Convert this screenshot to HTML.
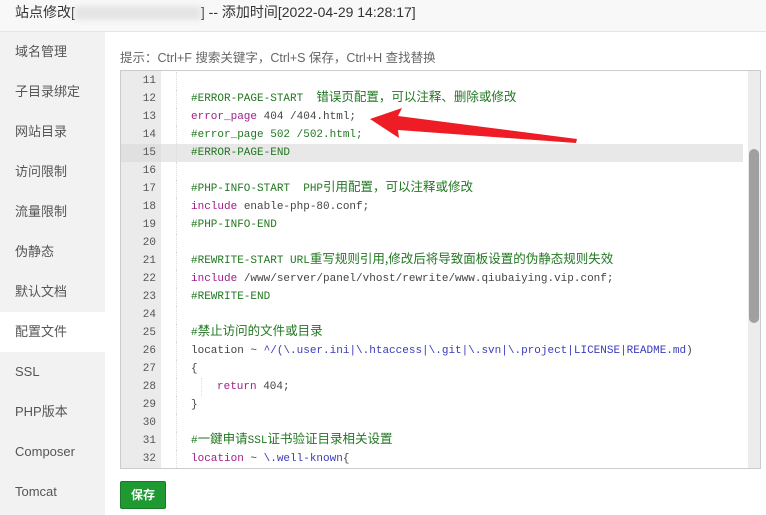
<!DOCTYPE html>
<html><head><meta charset="utf-8"><style>
*{margin:0;padding:0;box-sizing:border-box}
body{width:766px;height:515px;overflow:hidden;background:#fff;font-family:"Liberation Sans","Noto Sans CJK SC",sans-serif;position:relative}
.hd{position:absolute;left:0;top:0;width:766px;height:32px;background:#f8f8f8;border-bottom:1px solid #e5e5e5;font-size:14px;color:#333;padding-left:15px;line-height:24px}
.blur{display:inline-block;width:126px;height:14px;background:#e4e4e4;filter:blur(3px);vertical-align:middle}
.sb{position:absolute;left:0;top:32px;width:105px;height:483px;background:#f2f2f2}
.sb div{height:40px;line-height:40px;padding-left:15px;font-size:13px;color:#555}
.sb .on{background:#fff}
.tip{position:absolute;left:120px;top:47px;font-size:12.5px;color:#666}
.ed{position:absolute;left:120px;top:70px;width:641px;height:399px;border:1px solid #ccc;overflow:hidden;background:#fff}
.gut{position:absolute;left:0;top:0;width:40px;height:100%;background:#ebebeb}
.ln{position:absolute;left:0;width:100%;height:18px;font-family:"Liberation Mono","Noto Sans CJK SC",monospace;font-size:11px;line-height:18px;white-space:pre;color:#444}
.ln .n{position:absolute;left:0;width:35px;text-align:right;color:#555}
.ln .c{position:absolute;left:70px;top:0;height:18px}
.ln .g{position:absolute;left:55px;top:0;height:18px;border-left:1px dotted #ddd}
.z{display:inline-block;vertical-align:top;height:18px;line-height:18px;font-family:"Noto Sans CJK SC",sans-serif;font-size:12.5px;position:relative;top:-3px}
.cm{color:#227722}.kw{color:#a0208a}.s{color:#3b3bbd}
.hl{background:#e8e8e8}
.sc{position:absolute;right:0;top:0;width:12px;height:100%;background:#ececec}
.th{position:absolute;right:1px;top:78px;width:10px;height:174px;background:#a0a0a0;border-radius:5px}
.btn{position:absolute;left:120px;top:481px;width:46px;height:28px;background:#1f9a33;border:1px solid #167a27;border-radius:2px;color:#fff;font-size:12px;font-weight:bold;text-align:center;line-height:26px}
</style></head><body>
<div class="hd">站点修改[<span class="blur"></span>] -- 添加时间[2022-04-29 14:28:17]</div>
<div class="sb">
<div>域名管理</div><div>子目录绑定</div><div>网站目录</div><div>访问限制</div><div>流量限制</div><div>伪静态</div><div>默认文档</div><div class="on">配置文件</div><div>SSL</div><div>PHP版本</div><div>Composer</div><div>Tomcat</div>
</div>
<div class="tip">提示：Ctrl+F 搜索关键字，Ctrl+S 保存，Ctrl+H 查找替换</div>
<div class="ed">
<div class="gut"></div>
<div class="ln" style="top:1px"><span class="n">11</span><span class="g"></span></div>
<div class="ln" style="top:19px"><span class="n">12</span><span class="g"></span><span class="c cm">#ERROR-PAGE-START  <span class="z">错误页配置，可以注释、删除或修改</span></span></div>
<div class="ln" style="top:37px"><span class="n">13</span><span class="g"></span><span class="c"><span class="kw">error_page</span> 404 /404.html;</span></div>
<div class="ln" style="top:55px"><span class="n">14</span><span class="g"></span><span class="c cm">#error_page 502 /502.html;</span></div>
<div class="ln hl" style="top:73px;width:622px"><span class="n" style="background:#e0e0e0;width:40px;padding-right:5px">15</span><span class="g"></span><span class="c cm">#ERROR-PAGE-END</span></div>
<div class="ln" style="top:91px"><span class="n">16</span><span class="g"></span></div>
<div class="ln" style="top:109px"><span class="n">17</span><span class="g"></span><span class="c cm">#PHP-INFO-START  PHP<span class="z">引用配置，可以注释或修改</span></span></div>
<div class="ln" style="top:127px"><span class="n">18</span><span class="g"></span><span class="c"><span class="kw">include</span> enable-php-80.conf;</span></div>
<div class="ln" style="top:145px"><span class="n">19</span><span class="g"></span><span class="c cm">#PHP-INFO-END</span></div>
<div class="ln" style="top:163px"><span class="n">20</span><span class="g"></span></div>
<div class="ln" style="top:181px"><span class="n">21</span><span class="g"></span><span class="c cm">#REWRITE-START URL<span class="z">重写规则引用,修改后将导致面板设置的伪静态规则失效</span></span></div>
<div class="ln" style="top:199px"><span class="n">22</span><span class="g"></span><span class="c"><span class="kw">include</span> /www/server/panel/vhost/rewrite/www.qiubaiying.vip.conf;</span></div>
<div class="ln" style="top:217px"><span class="n">23</span><span class="g"></span><span class="c cm">#REWRITE-END</span></div>
<div class="ln" style="top:235px"><span class="n">24</span><span class="g"></span></div>
<div class="ln" style="top:253px"><span class="n">25</span><span class="g"></span><span class="c cm">#<span class="z">禁止访问的文件或目录</span></span></div>
<div class="ln" style="top:271px"><span class="n">26</span><span class="g"></span><span class="c">location ~ <span class="s">^/(\.user.ini|\.htaccess|\.git|\.svn|\.project|LICENSE|README.md</span>)</span></div>
<div class="ln" style="top:289px"><span class="n">27</span><span class="g"></span><span class="c">{</span></div>
<div class="ln" style="top:307px"><span class="n">28</span><span class="g"></span><span class="g" style="left:80px"></span><span class="c" style="left:96px"><span class="kw">return</span> 404;</span></div>
<div class="ln" style="top:325px"><span class="n">29</span><span class="g"></span><span class="c">}</span></div>
<div class="ln" style="top:343px"><span class="n">30</span><span class="g"></span></div>
<div class="ln" style="top:361px"><span class="n">31</span><span class="g"></span><span class="c cm">#<span class="z">一鍵申请</span>SSL<span class="z">证书验证目录相关设置</span></span></div>
<div class="ln" style="top:379px"><span class="n">32</span><span class="g"></span><span class="c"><span class="kw">location</span> ~ <span class="s">\.well-known</span>{</span></div>
<div class="sc"><div class="th"></div></div>
</div>
<svg style="position:absolute;left:0;top:0" width="766" height="515"><polygon points="370,119 402,108 398,116 577,139 576,143 398,130 399,138" fill="#ee1c24"/></svg>
<div class="btn">保存</div>
</body></html>
